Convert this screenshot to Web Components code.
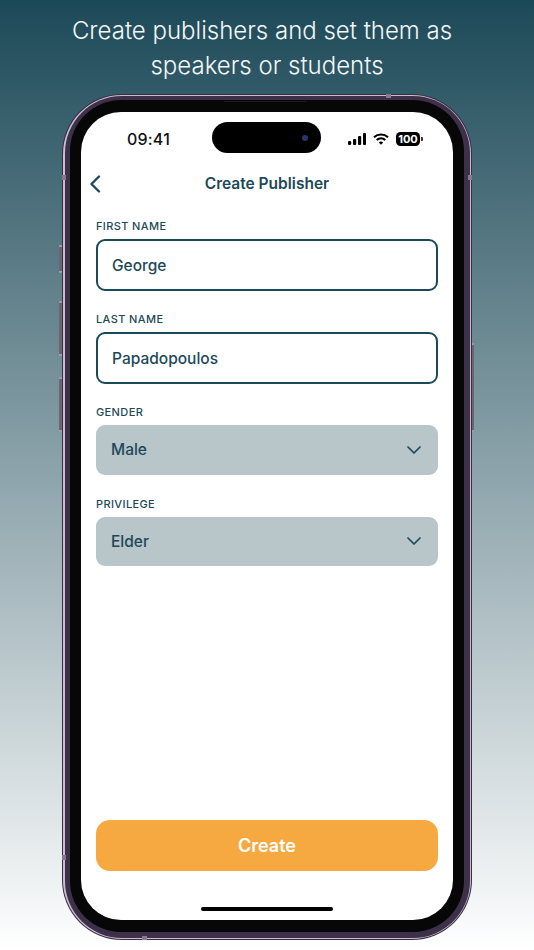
<!DOCTYPE html>
<html lang="en">
<head>
<meta charset="utf-8">
<title>Create Publisher</title>
<style>
    html, body { margin: 0; height: 100%; }
    body {
        width: 534px;
        height: 950px;
        overflow: hidden;
        font-family: "Inter", "Liberation Sans", sans-serif;
        background: linear-gradient(180deg, #1c4958 0%, #ffffff 100%);
    }
    .first-line { display: block; padding-right: 10px; }
</style>
</head>
<body>
<store-shot>
    <span slot="caption"><span class="first-line">Create publishers and set them as</span>speakers or students</span>
    <phone-frame>
        <status-bar></status-bar>
        <nav-header>Create Publisher</nav-header>
        <publisher-form>
            <form-field label="First name">George</form-field>
            <form-field label="Last name">Papadopoulos</form-field>
            <form-field label="Gender" select>Male</form-field>
            <form-field label="Privilege" select>Elder</form-field>
        </publisher-form>
        <primary-button>Create</primary-button>
    </phone-frame>
</store-shot>

<script>
class StoreShot extends HTMLElement {
    constructor() {
        super();
        this.attachShadow({ mode: 'open' });
    }

    connectedCallback() {
        this.shadowRoot.innerHTML = `
            <style>
                :host {
                    display: flex;
                    flex-direction: column;
                    align-items: center;
                    width: 534px;
                    height: 950px;
                }
                .caption {
                    margin: 13px 0 11px;
                    color: #f4f7f8;
                    font-size: 24px;
                    font-weight: 300;
                    line-height: 35px;
                    text-align: center;
                    white-space: nowrap;
                }
            </style>
            <div class="caption"><slot name="caption"></slot></div>
            <slot></slot>
        `;
    }
}

class PhoneFrame extends HTMLElement {
    constructor() {
        super();
        this.attachShadow({ mode: 'open' });
    }

    connectedCallback() {
        this.shadowRoot.innerHTML = `
            <style>
                :host {
                    display: block;
                    position: relative;
                    width: 410px;
                    height: 846px;
                }
                .edge {
                    box-sizing: border-box;
                    height: 100%;
                    padding: 1px;
                    border-radius: 60px;
                    background: #3a2e45;
                }
                .rim {
                    box-sizing: border-box;
                    height: 100%;
                    padding: 1px 1.5px;
                    border-radius: 59px;
                    background: #c9bdd0;
                }
                .band {
                    box-sizing: border-box;
                    height: 100%;
                    padding: 4px 5.5px 6px;
                    border-radius: 57px;
                    background: #3d314a;
                }
                .bezel {
                    box-sizing: border-box;
                    height: 100%;
                    padding: 12px 11px 12px;
                    border-radius: 51px;
                    background: #070707;
                }
                .screen {
                    position: relative;
                    box-sizing: border-box;
                    display: flex;
                    flex-direction: column;
                    height: 100%;
                    border-radius: 40px;
                    background: #ffffff;
                    overflow: hidden;
                }
                .home {
                    position: absolute;
                    left: 120px;
                    bottom: 9px;
                    width: 132px;
                    height: 4px;
                    border-radius: 2px;
                    background: #000000;
                }
                .key {
                    position: absolute;
                    box-sizing: border-box;
                    width: 3px;
                    background: #6a6570;
                    border-top: 2px solid #a29ca8;
                    border-bottom: 2px solid #a29ca8;
                    border-radius: 1px;
                }
                .mark {
                    position: absolute;
                    background: #85788f;
                }
                .speaker {
                    position: absolute;
                    left: 162px;
                    top: 7px;
                    width: 82px;
                    height: 1px;
                    background: #1d1a20;
                }
            </style>
            <div class="edge"><div class="rim"><div class="band"><div class="bezel">
                <div class="screen">
                    <slot></slot>
                    <div class="home"></div>
                </div>
            </div></div></div></div>
            <div class="speaker"></div>
            <div class="key" style="left:-3px;top:151px;height:28px"></div>
            <div class="key" style="left:-3px;top:207px;height:55px"></div>
            <div class="key" style="left:-3px;top:283px;height:55px"></div>
            <div class="key" style="right:-2px;width:2px;top:249px;height:89px"></div>
            <div class="mark" style="left:0;top:81px;width:4px;height:5px"></div>
            <div class="mark" style="right:0;top:81px;width:4px;height:5px"></div>
            <div class="mark" style="left:324px;top:0;width:5px;height:4px"></div>
            <div class="mark" style="left:80px;bottom:0;width:5px;height:4px"></div>
            <div class="mark" style="left:0;bottom:80px;width:4px;height:5px"></div>
        `;
    }
}

class StatusBar extends HTMLElement {
    constructor() {
        super();
        this.attachShadow({ mode: 'open' });
    }

    connectedCallback() {
        this.shadowRoot.innerHTML = `
            <style>
                :host {
                    display: grid;
                    grid-template-columns: 131px 109px 1fr;
                    align-items: center;
                    height: 31px;
                    padding-top: 10px;
                    flex: none;
                }
                .time {
                    justify-self: end;
                    padding: 3px 42px 0 0;
                    color: #111111;
                    font-size: 16px;
                    font-weight: 500;
                    letter-spacing: 0.2px;
                }
                .island {
                    position: relative;
                    height: 31px;
                    border-radius: 16px;
                    background: #000000;
                }
                .camera {
                    position: absolute;
                    left: 90px;
                    top: 13px;
                    width: 6px;
                    height: 6px;
                    border-radius: 50%;
                    background: #25366a;
                }
                .icons {
                    display: flex;
                    align-items: center;
                    gap: 7px;
                    padding: 3px 0 0 27px;
                }
                .battery {
                    display: flex;
                    align-items: center;
                    gap: 1px;
                }
                .level {
                    width: 24px;
                    height: 14px;
                    border-radius: 4.5px;
                    background: #000000;
                    color: #ffffff;
                    font-size: 11px;
                    font-weight: 700;
                    line-height: 14px;
                    text-align: center;
                }
                .nub {
                    width: 1.5px;
                    height: 4px;
                    border-radius: 0 1px 1px 0;
                    background: #333333;
                }
            </style>
            <div class="time">09:41</div>
            <div class="island"><div class="camera"></div></div>
            <div class="icons">
                <svg width="18" height="12" viewBox="0 0 18 12">
                    <rect x="0" y="8" width="3.2" height="4" rx="1.2"/>
                    <rect x="5" y="6" width="3.2" height="6" rx="1"/>
                    <rect x="10" y="3" width="3.2" height="9" rx="1"/>
                    <rect x="15" y="0" width="3" height="12" rx="1"/>
                </svg>
                <svg width="16" height="12" viewBox="0 0 16 12" fill="none" stroke="#000" stroke-width="2.2">
                    <path d="M1 4.2C5 .6 11 .6 15 4.2"/>
                    <path d="M3.7 7C6.2 4.8 9.8 4.8 12.3 7"/>
                    <path d="M8 11.8L5.8 9.4C7 8.3 9 8.3 10.2 9.4Z" fill="#000" stroke="none"/>
                </svg>
                <div class="battery"><div class="level">100</div><div class="nub"></div></div>
            </div>
        `;
    }
}

class NavHeader extends HTMLElement {
    constructor() {
        super();
        this.attachShadow({ mode: 'open' });
    }

    connectedCallback() {
        this.shadowRoot.innerHTML = `
            <style>
                :host {
                    display: block;
                    position: relative;
                    flex: none;
                    height: 44px;
                    line-height: 44px;
                    margin-top: 9px;
                    color: #1c4958;
                    font-size: 15.5px;
                    font-weight: 600;
                    text-align: center;
                }
                svg {
                    position: absolute;
                    left: 8px;
                    top: 13px;
                }
            </style>
            <svg width="14" height="18" viewBox="0 0 14 18" fill="none" stroke="#1c4958" stroke-width="2.3" stroke-linecap="round" stroke-linejoin="round">
                <path d="M10 1.5L2.5 9L10 16.5"/>
            </svg>
            <slot></slot>
        `;
    }
}

class PublisherForm extends HTMLElement {
    constructor() {
        super();
        this.attachShadow({ mode: 'open' });
    }

    connectedCallback() {
        this.shadowRoot.innerHTML = `
            <style>
                :host {
                    display: flex;
                    flex-direction: column;
                    gap: 21px;
                    flex: 1;
                    padding: 0 15px;
                    margin-top: 13px;
                }
            </style>
            <slot></slot>
        `;
    }
}

class FormField extends HTMLElement {
    constructor() {
        super();
        this.attachShadow({ mode: 'open' });
    }

    connectedCallback() {
        const label = this.getAttribute('label');
        const isSelect = this.hasAttribute('select');

        this.shadowRoot.innerHTML = `
            <style>
                :host {
                    display: block;
                    color: #1c4958;
                }
                :host([select]) {
                    padding-bottom: 1.2px;
                }
                .label {
                    height: 14px;
                    margin-bottom: 6px;
                    font-size: 11px;
                    font-weight: 550;
                    line-height: 14px;
                    letter-spacing: 0.38px;
                    text-transform: uppercase;
                }
                .box {
                    box-sizing: border-box;
                    display: flex;
                    align-items: center;
                    justify-content: space-between;
                    height: 52px;
                    padding: 0 14px;
                    border: 2px solid #1c4958;
                    border-radius: 9px;
                    font-size: 15.5px;
                    font-weight: 450;
                }
                .box.select {
                    height: 49.5px;
                    padding: 0 16px 0 15px;
                    border: none;
                    background: #b8c5c9;
                }
                svg { display: block; }
            </style>
            <div class="label">${label}</div>
            <div class="box ${isSelect ? 'select' : ''}">
                <span><slot></slot></span>
                ${isSelect ? `<svg width="16" height="10" viewBox="0 0 16 10" fill="none" stroke="#1c4958" stroke-width="1.7" stroke-linecap="round" stroke-linejoin="round"><path d="M2 2L8 8L14 2"/></svg>` : ''}
            </div>
        `;
    }
}

class PrimaryButton extends HTMLElement {
    constructor() {
        super();
        this.attachShadow({ mode: 'open' });
    }

    connectedCallback() {
        this.shadowRoot.innerHTML = `
            <style>
                :host {
                    display: block;
                    flex: none;
                    margin: 0 15px 49px;
                    height: 51px;
                    line-height: 51px;
                    border-radius: 14px;
                    background: #f7a941;
                    color: #ffffff;
                    font-size: 18px;
                    font-weight: 600;
                    text-align: center;
                }
            </style>
            <slot></slot>
        `;
    }
}

customElements.define('store-shot', StoreShot);
customElements.define('phone-frame', PhoneFrame);
customElements.define('status-bar', StatusBar);
customElements.define('nav-header', NavHeader);
customElements.define('publisher-form', PublisherForm);
customElements.define('form-field', FormField);
customElements.define('primary-button', PrimaryButton);
</script>
</body>
</html>
